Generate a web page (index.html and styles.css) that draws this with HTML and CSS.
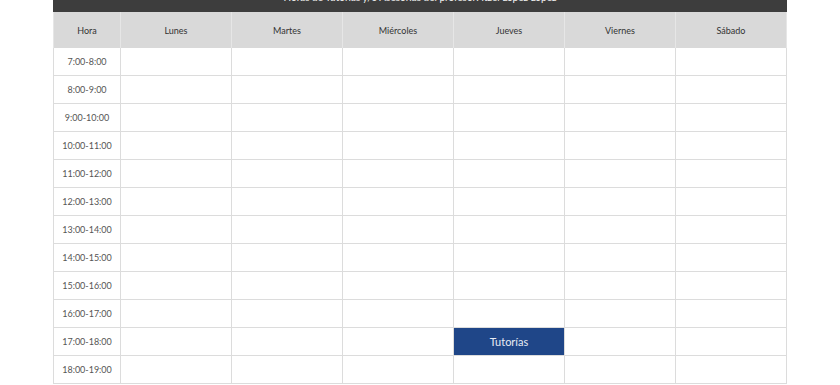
FILE: index.html
```html
<!DOCTYPE html>
<html lang="es">
<head>
<meta charset="utf-8">
<title>Horario</title>
<link rel="stylesheet" href="styles.css">
</head>
<body>
<div class="wrap">
  <div class="title">Horas de Tutorías y/o Asesorías del profesor: Itzel López López</div>
  <table class="sched">
    <colgroup>
      <col class="c-hora"><col><col><col><col><col><col>
    </colgroup>
    <thead>
      <tr><th>Hora</th><th>Lunes</th><th>Martes</th><th>Miércoles</th><th>Jueves</th><th>Viernes</th><th>Sábado</th></tr>
    </thead>
    <tbody>
      <tr><td>7:00-8:00</td><td></td><td></td><td></td><td></td><td></td><td></td></tr>
      <tr><td>8:00-9:00</td><td></td><td></td><td></td><td></td><td></td><td></td></tr>
      <tr><td>9:00-10:00</td><td></td><td></td><td></td><td></td><td></td><td></td></tr>
      <tr><td>10:00-11:00</td><td></td><td></td><td></td><td></td><td></td><td></td></tr>
      <tr><td>11:00-12:00</td><td></td><td></td><td></td><td></td><td></td><td></td></tr>
      <tr><td>12:00-13:00</td><td></td><td></td><td></td><td></td><td></td><td></td></tr>
      <tr><td>13:00-14:00</td><td></td><td></td><td></td><td></td><td></td><td></td></tr>
      <tr><td>14:00-15:00</td><td></td><td></td><td></td><td></td><td></td><td></td></tr>
      <tr><td>15:00-16:00</td><td></td><td></td><td></td><td></td><td></td><td></td></tr>
      <tr><td>16:00-17:00</td><td></td><td></td><td></td><td></td><td></td><td></td></tr>
      <tr><td>17:00-18:00</td><td></td><td></td><td></td><td class="busy">Tutorías</td><td></td><td></td></tr>
      <tr><td>18:00-19:00</td><td></td><td></td><td></td><td></td><td></td><td></td></tr>
    </tbody>
  </table>
</div>
</body>
</html>
```
FILE: styles.css
```css
html, body {
  margin: 0;
  padding: 0;
  background: #ffffff;
}
body {
  font-family: Lato, "Open Sans", "Liberation Sans", sans-serif;
  color: #444;
}
.wrap {
  width: 734px;
  margin: -18px auto 0;
}
.title {
  height: 30px;
  line-height: 30px;
  background: #3d3d3d;
  color: #f2f2f2;
  font-size: 10px;
  text-align: center;
}
.sched {
  width: 734px;
  border-collapse: collapse;
  table-layout: fixed;
}
.sched col.c-hora {
  width: 67px;
}
.sched th {
  height: 36px;
  padding: 0;
  background: #d9d9d9;
  border-left: 1px solid #e6e6e6;
  border-right: 1px solid #e6e6e6;
  font-weight: normal;
  font-size: 9px;
  color: #333;
}
.sched td {
  height: 27px;
  padding: 0;
  border: 1px solid #dcdcdc;
  border-top: none;
  font-size: 9px;
  color: #555;
  text-align: center;
}
.sched td.busy {
  background: #1f4688;
  color: #e8ecf4;
  font-size: 11px;
}
```
